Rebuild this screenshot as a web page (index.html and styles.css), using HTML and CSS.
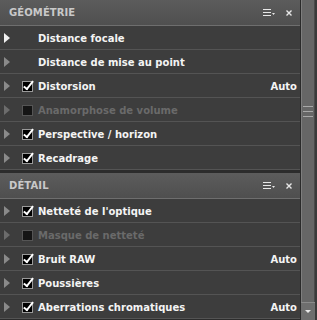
FILE: index.html
```html
<!DOCTYPE html>
<html>
<head>
<meta charset="utf-8">
<link rel="stylesheet" href="styles.css">
</head>
<body>
<div class="wrap">
  <div class="panels">
    <section class="panel">
      <div class="head">
        <span class="title">GÉOMÉTRIE</span>
        <span class="tools">
          <svg class="menu" width="12" height="7" viewBox="0 0 12 7"><rect x="0" y="0" width="8" height="1" fill="#e8e8e8"/><rect x="0" y="3" width="8" height="1" fill="#e8e8e8"/><rect x="0" y="6" width="8" height="1" fill="#e8e8e8"/><path d="M9 4h3l-1.5 2z" fill="#e8e8e8"/></svg>
          <svg class="close" width="6" height="6" viewBox="0 0 6 6"><path d="M0.5 0.5L5.5 5.5M5.5 0.5L0.5 5.5" stroke="#e8e8e8" stroke-width="1.4"/></svg>
        </span>
      </div>
      <div class="row"><span class="tri bright"></span><span class="nocb"></span><span class="label">Distance focale</span></div>
      <div class="row"><span class="tri"></span><span class="nocb"></span><span class="label">Distance de mise au point</span></div>
      <div class="row"><span class="tri"></span><span class="cb on"></span><span class="label">Distorsion</span><span class="val">Auto</span></div>
      <div class="row"><span class="tri dim"></span><span class="cb"></span><span class="label off">Anamorphose de volume</span></div>
      <div class="row"><span class="tri"></span><span class="cb on"></span><span class="label">Perspective / horizon</span></div>
      <div class="row"><span class="tri"></span><span class="cb on"></span><span class="label">Recadrage</span></div>
    </section>
    <section class="panel second">
      <div class="head">
        <span class="title">DÉTAIL</span>
        <span class="tools">
          <svg class="menu" width="12" height="7" viewBox="0 0 12 7"><rect x="0" y="0" width="8" height="1" fill="#e8e8e8"/><rect x="0" y="3" width="8" height="1" fill="#e8e8e8"/><rect x="0" y="6" width="8" height="1" fill="#e8e8e8"/><path d="M9 4h3l-1.5 2z" fill="#e8e8e8"/></svg>
          <svg class="close" width="6" height="6" viewBox="0 0 6 6"><path d="M0.5 0.5L5.5 5.5M5.5 0.5L0.5 5.5" stroke="#e8e8e8" stroke-width="1.4"/></svg>
        </span>
      </div>
      <div class="row"><span class="tri"></span><span class="cb on"></span><span class="label">Netteté de l'optique</span></div>
      <div class="row"><span class="tri dim"></span><span class="cb"></span><span class="label off">Masque de netteté</span></div>
      <div class="row"><span class="tri"></span><span class="cb on"></span><span class="label">Bruit RAW</span><span class="val">Auto</span></div>
      <div class="row"><span class="tri"></span><span class="cb on"></span><span class="label">Poussières</span></div>
      <div class="row"><span class="tri"></span><span class="cb on"></span><span class="label">Aberrations chromatiques</span><span class="val">Auto</span></div>
    </section>
  </div>
  <div class="scroll">
    <div class="thumb"><span class="grip"></span></div>
    <div class="down"><svg width="6" height="3" viewBox="0 0 6 3"><path d="M0 0h6l-3 3z" fill="#e8e8e8"/></svg></div>
  </div>
</div>
</body>
</html>
```
FILE: styles.css
```css
html, body { margin: 0; padding: 0; }
body {
  background: #2c2c2c;
  width: 317px;
  height: 320px;
  overflow: hidden;
  font-family: "DejaVu Sans", Verdana, sans-serif;
  font-weight: bold;
  font-size: 10px;
}
.wrap { display: flex; height: 320px; }
.panels { width: 300px; display: flex; flex-direction: column; }
.panel.second { margin-top: 3px; }
.head {
  height: 25px;
  border-bottom: 1px solid #6e6e6e;
  background: linear-gradient(#5c5c5c, #4f4f4f);
  display: flex;
  align-items: center;
  justify-content: space-between;
  padding: 0 8px 0 9px;
}
.title { color: #c9c9c9; font-size: 10px; letter-spacing: 0.1px; }
.tools { display: flex; align-items: center; gap: 11px; }
.row {
  height: 23px;
  border-bottom: 1px solid #545454;
  background: #3d3d3d;
  display: flex;
  align-items: center;
  padding: 1px 3px 0 4px;
  box-sizing: content-box;
  height: 22px;
  color: #f4f4f4;
}
.tri {
  width: 0; height: 0;
  border-left: 6px solid #8a8a8a;
  border-top: 5px solid transparent;
  border-bottom: 5px solid transparent;
  margin-right: 12px;
}
.tri.bright { border-left-color: #f0f0f0; }
.tri.dim { border-left-color: #6c6c6c; }
.nocb { width: 11px; height: 11px; margin-right: 5px; }
.cb {
  width: 9px; height: 9px;
  border: 1px solid #555;
  background: #151515;
  margin-right: 5px;
  position: relative;
}
.cb.on { background: #000; border-color: #9a9a9a; }
.cb.on::after {
  content: "";
  position: absolute;
  left: 3px; top: -3px;
  width: 3px; height: 9px;
  border-right: 2px solid #fff;
  border-bottom: 2px solid #fff;
  transform: rotate(38deg);
}
.label { flex: 1; }
.label.off { color: #6a6a6a; }
.val { color: #f4f4f4; }
.scroll {
  width: 17px;
  display: flex;
  flex-direction: column;
  background: #3a3a3a;
  border-left: 1px solid #2a2a2a;
  box-sizing: border-box;
}
.thumb {
  flex: 1;
  width: 14px;
  border-left: 1px solid #7e7e7e;
  border-right: 1px solid #4a4a4a;
  background: #666;
  display: flex;
  justify-content: center;
  box-sizing: border-box;
  padding-top: 106px;
}
.grip {
  width: 10px; height: 11px;
  border-top: 1px solid #a8a8a8;
  border-bottom: 1px solid #a8a8a8;
  position: relative;
  box-sizing: border-box;
}
.grip::after {
  content: ""; position: absolute; left: 0; right: 0; top: 4px;
  border-top: 1px solid #a8a8a8;
}
.down {
  height: 18px;
  width: 14px;
  background: #6e6e6e;
  border-top: 1px solid #8a8a8a;
  display: flex;
  align-items: center;
  justify-content: center;
  box-sizing: border-box;
}
```
